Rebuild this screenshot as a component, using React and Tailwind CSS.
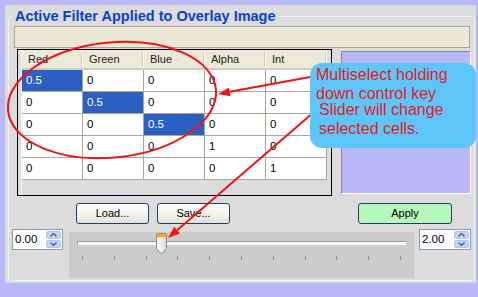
import React from "react";

const rows = [
  ["0.5", "0", "0", "0", "0"],
  ["0", "0.5", "0", "0", "0"],
  ["0", "0", "0.5", "0", "0"],
  ["0", "0", "0", "1", "0"],
  ["0", "0", "0", "0", "1"],
];
const heads = ["Red", "Green", "Blue", "Alpha", "Int"];

function Arrow({ x1, y1, x2, y2, color = "#f01414" }) {
  const dx = x2 - x1;
  const dy = y2 - y1;
  const len = Math.hypot(dx, dy);
  const ux = dx / len;
  const uy = dy / len;
  const L = 12;
  const W = 4.5;
  const bx = x2 - L * ux;
  const by = y2 - L * uy;
  const px = -uy;
  const py = ux;
  return (
    <g>
      <line x1={x1} y1={y1} x2={bx} y2={by} stroke={color} strokeWidth="2" />
      <polygon
        points={`${x2},${y2} ${bx + W * px},${by + W * py} ${bx - W * px},${by - W * py}`}
        fill={color}
      />
    </g>
  );
}

function Spin({ value }) {
  return (
    <div className="flex h-[21px] w-full items-center border border-[#7f9db9] bg-white">
      <span className="pl-[2px] text-[11.5px] leading-none text-black">{value}</span>
      <div className="ml-auto mr-px flex h-[17px] w-[15px] flex-col gap-px">
        <div className="flex flex-1 items-center justify-center rounded-[2px] border border-[#b4c6f0] bg-[#c3d3fb]">
          <svg width="7" height="4" viewBox="0 0 7 4">
            <path d="M0.5 3.5 L3.5 0.5 L6.5 3.5" fill="none" stroke="#4d6185" strokeWidth="1.4" />
          </svg>
        </div>
        <div className="flex flex-1 items-center justify-center rounded-[2px] border border-[#b4c6f0] bg-[#c3d3fb]">
          <svg width="7" height="4" viewBox="0 0 7 4">
            <path d="M0.5 0.5 L3.5 3.5 L6.5 0.5" fill="none" stroke="#4d6185" strokeWidth="1.4" />
          </svg>
        </div>
      </div>
    </div>
  );
}

function XPButton({ children, className = "", green = false }) {
  return (
    <button
      className={
        "flex h-[21px] items-center justify-center rounded-[3px] border border-[#1c3f6e] text-[11px] text-black " +
        (green
          ? "bg-[#b6f8ba] "
          : "bg-linear-to-b from-white via-[#f4f3ee] to-[#e3e1d6] ") +
        className
      }
    >
      {children}
    </button>
  );
}

export default function App() {
  const ticks = Array.from({ length: 11 });
  return (
    <div className="relative h-[297px] w-[478px] overflow-hidden bg-[#b8b8f8] pl-[5px] pt-[5px] font-['Liberation_Sans',Arial,sans-serif]">
      <div className="h-[278px] w-[471px] bg-[#dcdcdc] pl-[3px] pt-[3px]">
        <fieldset className="h-[273px] w-[467px] rounded-[3px] border border-[#f2f2f2]">
          <legend className="ml-[3px] px-[3px] text-[14.5px] font-bold leading-[16px] text-[#0b3fd1]">
            Active Filter Applied to Overlay Image
          </legend>

          {/* beige bar */}
          <div className="ml-[5px] mt-[2px] h-[22px] w-[456px] border border-[#a8a597] bg-[#ebe8d7]" />

          {/* table + preview */}
          <div className="mt-[1px] flex items-start">
            <div className="ml-[8px] flex h-[147px] w-[315px] border border-black bg-[#dcdcdc]">
              <div className="w-[4px] self-stretch border-r border-[#f4f4f4]" />
              <div className="flex w-[305px] flex-col">
                <div className="flex h-[20px] border-b-[2px] border-[#d2cebd] bg-[#ece9d8]">
                  {heads.map((h) => (
                    <div key={h} className="flex w-[61px] items-center">
                      <span className="flex-1 pl-[6px] text-[11px] leading-none text-[#222]">{h}</span>
                      <div className="h-[13px] w-[2px] border-l border-r border-l-[#cbc7b8] border-r-white" />
                    </div>
                  ))}
                </div>
                {rows.map((r, ri) => (
                  <div key={ri} className="flex h-[22px] border-b border-[#aca899]">
                    {r.map((c, ci) => {
                      const sel = ri === ci && ri < 3;
                      return (
                        <div
                          key={ci}
                          className={
                            "flex w-[61px] items-center border-r border-[#aca899] pl-[4px] text-[11.5px] leading-none " +
                            (sel ? "bg-[#2b5fc1] text-white" : "bg-white text-black")
                          }
                        >
                          {c}
                        </div>
                      );
                    })}
                  </div>
                ))}
              </div>
            </div>
            <div className="ml-[9px] mt-[2px] h-[143px] w-[130px] border border-b-white border-l-[#8a8a8a] border-r-white border-t-[#8a8a8a] bg-[#b8b8f8]" />
          </div>

          {/* buttons */}
          <div className="mt-[7px] flex">
            <XPButton className="ml-[67px] w-[73px]">Load...</XPButton>
            <XPButton className="ml-[8px] w-[73px]">Save...</XPButton>
            <XPButton green className="ml-[128px] w-[94px]">Apply</XPButton>
          </div>

          {/* slider row */}
          <div className="mt-[5px] flex items-start">
            <div className="ml-[3px] w-[51px]">
              <Spin value="0.00" />
            </div>
            <div className="relative ml-[6px] mt-[3px] h-[46px] w-[345px] bg-[#cbcbcb]">
              <div className="mx-[8px] mt-[9px] h-[4px] border-l border-t border-[#9c9c9c] bg-[#fbfbfb]" />
              <div className="mt-[11px] flex justify-between px-[13px]">
                {ticks.map((_, i) => (
                  <div key={i} className="h-[4px] w-px bg-[#8e8e8e]" />
                ))}
              </div>
              <svg className="absolute left-[87px] top-[1px]" width="11" height="22" viewBox="0 0 11 22">
                <defs>
                  <linearGradient id="tb" x1="0" x2="1" y1="0" y2="0">
                    <stop offset="0" stopColor="#ffffff" />
                    <stop offset="1" stopColor="#dcdcd4" />
                  </linearGradient>
                </defs>
                <path d="M0.5 2 Q0.5 0.5 2 0.5 H9 Q10.5 0.5 10.5 2 V15.5 L5.5 21 L0.5 15.5 Z" fill="url(#tb)" stroke="#8d8d86" strokeWidth="1" />
                <path d="M1 2 Q1 1 2 1 H9 Q10 1 10 2 V4 H1 Z" fill="#f5a623" />
                <line x1="1" y1="4.5" x2="10" y2="4.5" stroke="#fcd27a" strokeWidth="1" />
              </svg>
            </div>
            <div className="ml-[5px] w-[52px]">
              <Spin value="2.00" />
            </div>
          </div>
        </fieldset>
      </div>

      {/* annotations */}
      <svg className="pointer-events-none absolute left-0 top-0" width="478" height="297" viewBox="0 0 478 297">
        <ellipse cx="112" cy="100" rx="104.5" ry="57.5" transform="rotate(-6 112 100)" fill="none" stroke="#f01414" strokeWidth="2" />
        <Arrow x1={310} y1={77} x2={218} y2={94} />
        <Arrow x1={314} y1={112} x2={168} y2={238} />
      </svg>
      <div className="absolute left-[310px] top-[63px] h-[85px] w-[166px] rounded-[12px] bg-[#5ec5f9] pt-[2px] text-[16px] leading-[19px] text-[#e41b23]">
        <div className="pl-[6px]">
          <div>Multiselect holding</div>
          <div>down control key</div>
        </div>
        <div className="-mt-[3px] pl-[9px]">
          <div>Slider will change</div>
          <div>selected cells.</div>
        </div>
      </div>
    </div>
  );
}
